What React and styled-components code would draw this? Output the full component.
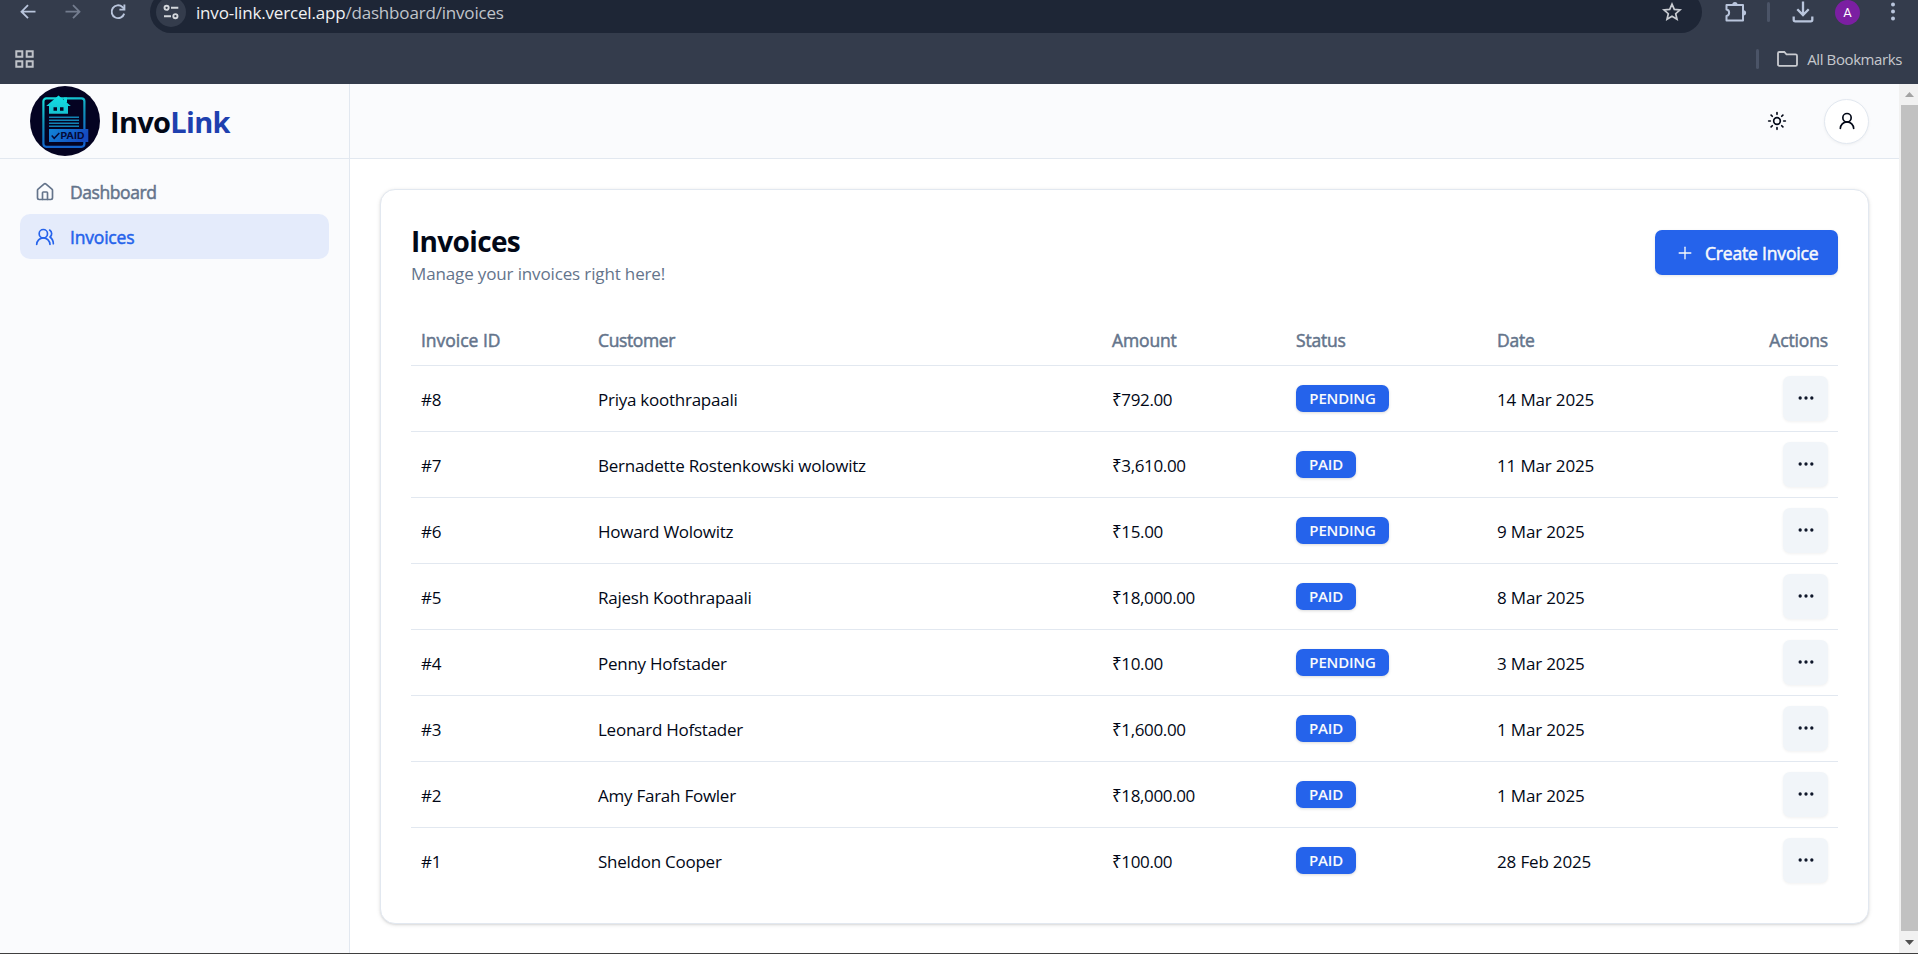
import React from "react";
import styled, { createGlobalStyle, css } from "styled-components";
import { Ellipsis, House, Plus, Sun, UserRound, UsersRound } from "lucide-react";

const color = {
  chrome: "#343c4c",
  omnibox: "#1e2636",
  chromeIcon: "#b9c5dc",
  surface: "#fafbfd",
  border: "#e2e8f0",
  ink: "#020817",
  muted: "#64748b",
  primary: "#2563eb",
  secondary: "#f1f5f9",
};

const GlobalStyle = createGlobalStyle`
  * { box-sizing: border-box; }
  body {
    margin: 0;
    overflow: hidden;
    background: #fff;
    color: ${color.ink};
    font-family: "Open Sans", "Noto Sans", sans-serif;
    font-size: 17px;
  }
  svg { display: block; flex: none; }
`;

const medium = css`
  font-size: 17.5px;
  -webkit-text-stroke: 0.5px currentColor;
  letter-spacing: ${(p) => p.$track || 0}px;
`;

const Screen = styled.div`
  width: 1918px;
  height: 954px;
  display: flex;
  flex-direction: column;
  overflow: hidden;
  border-bottom: 1px solid #3f3f3f;
`;

/* ---------- browser chrome ---------- */

const Chrome = styled.header`
  height: 84px;
  flex: none;
  background: ${color.chrome};
`;

const Toolbar = styled.div`
  height: 33px;
  display: flex;
  align-items: flex-end;
  overflow: hidden;
  padding-left: 5px;
`;

const ToolSlot = styled.div`
  width: ${(p) => p.$width}px;
  height: 42px;
  flex: none;
  display: flex;
  align-items: center;
  justify-content: center;
  color: ${(p) => (p.$dim ? "#737c8e" : color.chromeIcon)};
`;

const Omnibox = styled.div`
  width: 1552px;
  height: 42px;
  flex: none;
  margin-left: 10px;
  padding: 0 19px 0 6px;
  border-radius: 21px;
  background: ${color.omnibox};
  display: flex;
  align-items: center;
  justify-content: space-between;
  color: #c9ccd2;
`;

const Address = styled.div`
  display: flex;
  align-items: center;
  gap: 10px;
`;

const SiteInfo = styled.span`
  width: 30px;
  height: 30px;
  border-radius: 50%;
  background: ${color.chrome};
  display: grid;
  place-items: center;
`;

const Url = styled.span`
  color: #c0c4cb;
  font-size: 17px;
  line-height: 24px;
  letter-spacing: -0.18px;
  padding-top: 1px;
`;

const Host = styled.span`
  color: #f0f1f3;
`;

const ChromeDivider = styled.span`
  width: 3px;
  height: 20px;
  flex: none;
  border-radius: 2px;
  background: #4b5467;
`;

const Profile = styled.span`
  width: 25px;
  height: 25px;
  border-radius: 50%;
  background: #7b1fa2;
  color: #fff;
  font: 13px/25px Roboto, sans-serif;
  text-align: center;
`;

const BookmarkBar = styled.div`
  height: 51px;
  display: flex;
  align-items: center;
  padding: 0 16px 0 15px;
  color: #c6c8cd;
`;

const AllBookmarks = styled.div`
  margin-left: auto;
  display: flex;
  align-items: center;
  font-size: 15px;
  letter-spacing: -0.4px;
`;

const FolderSlot = styled.span`
  margin: 0 9px 0 18px;
`;

/* ---------- application shell ---------- */

const Page = styled.div`
  flex: 1;
  min-height: 0;
  display: grid;
  grid-template-columns: 350px 1fr 19px;
`;

const Sidebar = styled.aside`
  background: ${color.surface};
  border-right: 1px solid ${color.border};
`;

const Brand = styled.div`
  height: 75px;
  padding: 0 0 1px 30px;
  border-bottom: 1px solid ${color.border};
  display: flex;
  align-items: center;
`;

const BrandName = styled.span`
  margin-left: 10px;
  padding-top: 2px;
  font-size: 29px;
  line-height: 40px;
  font-weight: 700;
  letter-spacing: -0.7px;
`;

const BrandAccent = styled.span`
  color: #1e40af;
`;

const Nav = styled.nav`
  padding: 10px 20px;
  display: grid;
`;

const NavItem = styled.a`
  ${medium}
  height: 45px;
  padding-left: 15px;
  display: flex;
  align-items: center;
  gap: 15px;
  border-radius: 10px;
  color: ${(p) => (p.$active ? color.primary : color.muted)};
  background: ${(p) => (p.$active ? "#e4ebfb" : "transparent")};
`;

const Content = styled.div`
  display: flex;
  flex-direction: column;
`;

const TopBar = styled.div`
  height: 75px;
  flex: none;
  background: ${color.surface};
  border-bottom: 1px solid ${color.border};
  display: flex;
  align-items: center;
  justify-content: flex-end;
  padding-right: 30px;
  gap: 37px;
`;

const AccountButton = styled.button`
  width: 45px;
  height: 45px;
  padding: 0;
  border: 1px solid ${color.border};
  border-radius: 50%;
  background: #fff;
  color: ${color.ink};
  display: grid;
  place-items: center;
  box-shadow: 0 1px 3px rgba(0, 0, 0, 0.05);
`;

const Main = styled.main`
  flex: 1;
  padding: 30px 30px 0;
`;

const Card = styled.section`
  height: 735px;
  border: 1px solid ${color.border};
  border-radius: 15px;
  background: #fff;
  box-shadow: 0 1px 4px rgba(0, 0, 0, 0.1), 0 1px 2px rgba(0, 0, 0, 0.08);
  padding: 30px;
`;

const CardHeader = styled.div`
  height: 91px;
  display: flex;
  justify-content: space-between;
  align-items: flex-start;
`;

const Title = styled.h1`
  margin: 2px 0 0;
  font-size: 28px;
  line-height: 38px;
  font-weight: 700;
  letter-spacing: -0.66px;
`;

const Subtitle = styled.p`
  margin: 1px 0 0;
  color: ${color.muted};
  line-height: 25px;
  letter-spacing: -0.14px;
`;

const CreateButton = styled.button`
  ${medium}
  width: 183px;
  height: 45px;
  margin-top: 10px;
  padding: 0 0 0 20px;
  border: 0;
  border-radius: 7px;
  background: ${color.primary};
  color: #f8fafc;
  font-family: inherit;
  display: flex;
  align-items: center;
  gap: 10px;
  box-shadow: 0 1px 3px rgba(0, 0, 0, 0.1);
`;

const Row = styled.div`
  height: 66px;
  display: grid;
  grid-template-columns: 177px 514px 184px 201px 1fr 80px;
  align-items: center;
  border-bottom: 1px solid ${color.border};
  &:last-child { border-bottom-color: transparent; }
`;

const HeadRow = styled(Row)`
  height: 55px;
  padding-top: 3px;
  color: ${color.muted};
`;

const HeadCell = styled.span`
  ${medium}
  padding-left: ${(p) => (p.$end ? 0 : 10)}px;
  padding-right: ${(p) => (p.$end ? 10 : 0)}px;
  justify-self: ${(p) => (p.$end ? "end" : "start")};
`;

const Cell = styled.span`
  padding: 1px 0 0 10px;
  line-height: 25px;
  letter-spacing: ${(p) => p.$track}px;
`;

const BadgeCell = styled.span`
  padding-left: 10px;
`;

const Badge = styled.span`
  display: block;
  width: ${(p) => (p.$wide ? 93 : 60)}px;
  height: 27px;
  border-radius: 7px;
  background: ${color.primary};
  color: #f8fafc;
  font-size: 15px;
  font-weight: 600;
  line-height: 27px;
  letter-spacing: -0.18px;
  text-align: center;
  box-shadow: 0 1px 3px rgba(0, 0, 0, 0.15);
`;

const ActionButton = styled.button`
  width: 45px;
  height: 45px;
  padding: 0 0 1px;
  border: 0;
  border-radius: 7px;
  background: ${color.secondary};
  color: #0f172a;
  display: grid;
  place-items: center;
  justify-self: end;
  margin-right: 10px;
  box-shadow: 0 1px 3px rgba(0, 0, 0, 0.06);
`;

/* ---------- scrollbar ---------- */

const Scrollbar = styled.div`
  background: #f1f1f1;
  display: flex;
  flex-direction: column;
  align-items: flex-end;
`;

const ScrollArrow = styled.span`
  width: 17px;
  height: ${(p) => p.$height}px;
  display: grid;
  place-items: center;
`;

const ScrollThumb = styled.span`
  width: 17px;
  flex: 1;
  background: #c1c1c1;
`;

/* ---------- drawings ---------- */

const BackIcon = () => (
  <svg width="20" height="20" viewBox="0 0 20 20" fill="none" stroke="currentColor" strokeWidth="1.8">
    <path d="M17.5 9.7H4M10 3.2 3.5 9.7 10 16.2" />
  </svg>
);

const ForwardIcon = () => (
  <svg width="20" height="20" viewBox="0 0 20 20" fill="none" stroke="currentColor" strokeWidth="1.8">
    <path d="M2.5 9.7H16M10 3.2l6.5 6.5-6.5 6.5" />
  </svg>
);

const ReloadIcon = () => (
  <svg width="20" height="20" viewBox="0 0 20 20" fill="none" stroke="currentColor" strokeWidth="1.9">
    <path d="M16.2 11.6A6.4 6.4 0 1 1 14.4 5l1.6 1.7" />
    <path d="M16.4 2.6v5h-5" />
  </svg>
);

const TuneIcon = () => (
  <svg width="18" height="18" viewBox="0 0 18 18" fill="none" stroke="#d4d7dc" strokeWidth="1.9">
    <circle cx="4.6" cy="4.8" r="2.1" />
    <path d="M9 4.8h7.3M2 13.2h7" />
    <circle cx="13.4" cy="13.2" r="2.1" />
  </svg>
);

const StarIcon = () => (
  <svg width="22" height="22" viewBox="0 0 22 22" fill="none" stroke="currentColor" strokeWidth="1.7">
    <path d="m11 3.2 2.3 5.2 5.7.5-4.3 3.8 1.3 5.6-5-3-5 3 1.3-5.6L3 8.9l5.7-.5Z" />
  </svg>
);

const PuzzleIcon = () => (
  <svg width="24" height="24" viewBox="0 0 24 24" fill="none" stroke="currentColor" strokeWidth="2">
    <path d="M3.5 5H20v15.500H3.500v-4.600a3.200 3.200 0 0 0 0-6.300Z" strokeLinejoin="round" />
    <path d="M9.300 4.500a2.600 2.600 0 0 1 5.200 0ZM20.500 10.200a2.600 2.600 0 0 1 0 5.200Z" fill="currentColor" stroke="none" />
  </svg>
);

const DownloadIcon = () => (
  <svg width="24" height="24" viewBox="0 0 24 24" fill="none" stroke="currentColor" strokeWidth="2.3">
    <path d="M12 1.500v13M6.300 9.300 12 15l5.700-5.700M2.700 16.500v3.300q0 1.500 1.500 1.500h15.600q1.500 0 1.500-1.500v-3.300" />
  </svg>
);

const KebabIcon = () => (
  <svg width="6" height="22" viewBox="0 0 6 22" fill="currentColor">
    <circle cx="3" cy="3.6" r="2" />
    <circle cx="3" cy="10.6" r="2" />
    <circle cx="3" cy="17.6" r="2" />
  </svg>
);

const AppsIcon = () => (
  <svg width="19" height="18" viewBox="0 0 19 18" fill="none" stroke="#bfc2c8" strokeWidth="2">
    <path d="M1.300 1.200h6v5.600h-6ZM11.700 1.200h6v5.600h-6ZM1.300 11.200h6v5.600h-6ZM11.700 11.200h6v5.600h-6Z" />
  </svg>
);

const FolderIcon = () => (
  <svg width="21" height="16" viewBox="0 0 21 16" fill="none" stroke="#c9cbd0" strokeWidth="1.8">
    <path d="M1 2.300Q1 1 2.300 1h5l2.200 2.300h9Q20 3.300 20 4.700v8.700q0 1.400-1.400 1.400H2.400Q1 14.800 1 13.400Z" />
  </svg>
);

const LogoText = styled.text`
  font: 700 9.3px Inter, sans-serif;
`;

const Logo = () => (
  <svg width="70" height="70" viewBox="0 0 70 70">
    <defs>
      <linearGradient id="glow" x1="0" y1="0" x2="0.25" y2="1">
        <stop offset="0" stopColor="#18dcdc" />
        <stop offset="0.5" stopColor="#1090b8" />
        <stop offset="1" stopColor="#1262cc" />
      </linearGradient>
      <linearGradient id="house" x1="0" y1="0" x2="0" y2="1">
        <stop offset="0" stopColor="#10e0e4" />
        <stop offset="1" stopColor="#16c2d2" />
      </linearGradient>
      <linearGradient id="paid" x1="0" y1="0" x2="1" y2="0.3">
        <stop offset="0" stopColor="#1185d8" />
        <stop offset="1" stopColor="#154bc0" />
      </linearGradient>
    </defs>
    <circle cx="35" cy="35" r="35" fill="#040322" />
    <rect x="13.4" y="12.300" width="41" height="48.5" rx="3" fill="none" stroke="url(#glow)" strokeWidth="2.2" />
    <path d="M28.500 9.500 40.800 20H38v7.800H19V20h-2.800Z" fill="url(#house)" />
    <path d="M34 11.500h3v5h-3Z" fill="#10dce0" />
    <path d="M23.500 21.300H27v3.500h-3.500ZM30 21.300h3.500v3.500H30Z" fill="#040322" />
    <path d="M19 31.200h30M19 34.200h30M19 37.200h30M19 40.200h30" stroke="#1183b4" strokeWidth="1.6" />
    <path d="M19 43h39.300v13H19Z" fill="url(#paid)" />
    <path d="m21.700 49.600 2.500 2.700 5.100-5.400" fill="none" stroke="#050a38" strokeWidth="1.5" />
    <LogoText x="30.5" y="53" fill="#050a38" textLength="24" lengthAdjust="spacingAndGlyphs">PAID</LogoText>
  </svg>
);

const UpArrow = () => (
  <svg width="9" height="5" viewBox="0 0 9 5"><path d="M0 5 4.500 0 9 5Z" fill="#a3a3a3" /></svg>
);

const DownArrow = () => (
  <svg width="9" height="5" viewBox="0 0 9 5"><path d="M0 0h9L4.500 5Z" fill="#505050" /></svg>
);

/* ---------- data ---------- */

const invoices = [
  [8, "Priya koothrapaali", "₹792.00", "PENDING", "14 Mar 2025"],
  [7, "Bernadette Rostenkowski wolowitz", "₹3,610.00", "PAID", "11 Mar 2025"],
  [6, "Howard Wolowitz", "₹15.00", "PENDING", "9 Mar 2025"],
  [5, "Rajesh Koothrapaali", "₹18,000.00", "PAID", "8 Mar 2025"],
  [4, "Penny Hofstader", "₹10.00", "PENDING", "3 Mar 2025"],
  [3, "Leonard Hofstader", "₹1,600.00", "PAID", "1 Mar 2025"],
  [2, "Amy Farah Fowler", "₹18,000.00", "PAID", "1 Mar 2025"],
  [1, "Sheldon Cooper", "₹100.00", "PAID", "28 Feb 2025"],
];

function BrowserChrome() {
  return (
    <Chrome>
      <Toolbar>
        <ToolSlot $width={45}><BackIcon /></ToolSlot>
        <ToolSlot $width={45} $dim><ForwardIcon /></ToolSlot>
        <ToolSlot $width={45}><ReloadIcon /></ToolSlot>
        <Omnibox>
          <Address>
            <SiteInfo><TuneIcon /></SiteInfo>
            <Url><Host>invo-link.vercel.app</Host>/dashboard/invoices</Url>
          </Address>
          <StarIcon />
        </Omnibox>
        <ToolSlot $width={65}><PuzzleIcon /></ToolSlot>
        <ToolSlot $width={3}><ChromeDivider /></ToolSlot>
        <ToolSlot $width={65}><DownloadIcon /></ToolSlot>
        <ToolSlot $width={25}><Profile>A</Profile></ToolSlot>
        <ToolSlot $width={65}><KebabIcon /></ToolSlot>
      </Toolbar>
      <BookmarkBar>
        <AppsIcon />
        <AllBookmarks>
          <ChromeDivider />
          <FolderSlot><FolderIcon /></FolderSlot>
          All Bookmarks
        </AllBookmarks>
      </BookmarkBar>
    </Chrome>
  );
}

function InvoiceTable() {
  return (
    <div>
      <HeadRow>
        <HeadCell $track={-0.02}>Invoice ID</HeadCell>
        <HeadCell $track={-0.37}>Customer</HeadCell>
        <HeadCell $track={-0.13}>Amount</HeadCell>
        <HeadCell $track={-0.2}>Status</HeadCell>
        <HeadCell $track={-0.2}>Date</HeadCell>
        <HeadCell $track={-0.13} $end>Actions</HeadCell>
      </HeadRow>
      {invoices.map(([id, customer, amount, status, date]) => (
        <Row key={id}>
          <Cell $track={-0.3}>#{id}</Cell>
          <Cell $track={-0.25}>{customer}</Cell>
          <Cell $track={-0.37}>{amount}</Cell>
          <BadgeCell><Badge $wide={status === "PENDING"}>{status}</Badge></BadgeCell>
          <Cell $track={-0.16}>{date}</Cell>
          <ActionButton><Ellipsis size={20} /></ActionButton>
        </Row>
      ))}
    </div>
  );
}

export default function App() {
  return (
    <Screen>
      <GlobalStyle />
      <BrowserChrome />
      <Page>
        <Sidebar>
          <Brand>
            <Logo />
            <BrandName>Invo<BrandAccent>Link</BrandAccent></BrandName>
          </Brand>
          <Nav>
            <NavItem $track={-0.43}><House size={20} />Dashboard</NavItem>
            <NavItem $track={-0.19} $active><UsersRound size={20} />Invoices</NavItem>
          </Nav>
        </Sidebar>
        <Content>
          <TopBar>
            <Sun size={20} />
            <AccountButton><UserRound size={20} /></AccountButton>
          </TopBar>
          <Main>
            <Card>
              <CardHeader>
                <div>
                  <Title>Invoices</Title>
                  <Subtitle>Manage your invoices right here!</Subtitle>
                </div>
                <CreateButton $track={-0.18}><Plus size={20} strokeWidth={1.6} />Create Invoice</CreateButton>
              </CardHeader>
              <InvoiceTable />
            </Card>
          </Main>
        </Content>
        <Scrollbar>
          <ScrollArrow $height={21}><UpArrow /></ScrollArrow>
          <ScrollThumb />
          <ScrollArrow $height={22}><DownArrow /></ScrollArrow>
        </Scrollbar>
      </Page>
    </Screen>
  );
}
